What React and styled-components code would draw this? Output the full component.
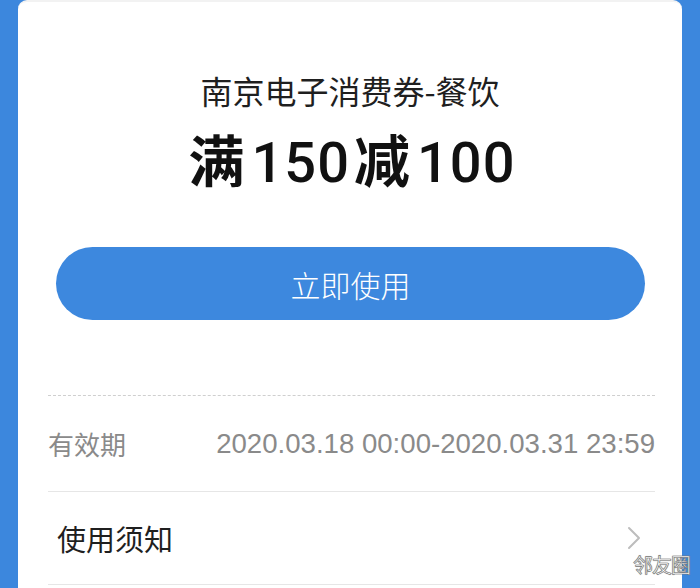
import styled, { createGlobalStyle } from "styled-components";

const GlobalStyle = createGlobalStyle`
  html, body {
    margin: 0;
    padding: 0;
    background: #3c87dd;
  }
  #root {
    height: 588px;
  }
`;

const Page = styled.div`
  height: 588px;
  padding: 0 18px;
  box-sizing: border-box;
  background: #3c87dd;
  overflow: hidden;
  position: relative;
  font-family: "Liberation Sans", "Noto Sans CJK SC", sans-serif;
`;

const Card = styled.div`
  height: 100%;
  background: #fff;
  border-radius: 9px 9px 0 0;
  border-top: 2px solid #f2f2f2;
  box-sizing: border-box;
  padding-top: 68px;
  display: flex;
  flex-direction: column;
`;

const Title = styled.div`
  text-align: center;
  font-size: 32px;
  line-height: 40px;
  height: 40px;
  color: #1f1f1f;
  font-family: "Noto Sans CJK SC", sans-serif;
`;

const Amount = styled.div`
  margin-top: 18px;
  height: 60px;
  text-align: center;
  font-size: 56px;
  line-height: 60px;
  font-weight: 500;
  color: #111;
  letter-spacing: 1px;
  font-family: Roboto, "Noto Sans CJK SC", sans-serif;
  span {
    font-family: "Noto Sans CJK SC", sans-serif;
    font-weight: 700;
    margin: 0 6px 0 4px;
  }
`;

const UseButton = styled.button`
  flex: none;
  margin: 59px 37px 0 38px;
  height: 73px;
  border: none;
  border-radius: 37px;
  background: #3d88de;
  color: #fff;
  font-size: 30px;
  font-family: "Noto Sans CJK SC", sans-serif;
  font-weight: 300;
  cursor: pointer;
`;

const Details = styled.div`
  margin: 75px 27px 0 30px;
  border-top: 1px dashed #cfcfcf;
`;

const Row = styled.div`
  display: flex;
  align-items: center;
  justify-content: space-between;
  height: ${(p) => p.$h}px;
  padding-left: ${(p) => p.$indent || 0}px;
  padding-right: ${(p) => p.$right || 0}px;
  border-bottom: 1px solid #e6e6e6;
  box-sizing: border-box;
`;

const Label = styled.div`
  font-family: "Noto Sans CJK SC", sans-serif;
  font-size: ${(p) => p.$size}px;
  color: ${(p) => p.$color};
`;

const DateText = styled.div`
  font-family: "Liberation Sans", sans-serif;
  font-size: 27.6px;
  color: #8a8a8a;
`;

const Watermark = styled.div`
  position: absolute;
  right: 10px;
  bottom: 9px;
  font-family: "Noto Sans CJK SC", sans-serif;
  font-size: 20px;
  color: #fff;
  letter-spacing: -1px;
  -webkit-text-stroke: 0.6px #777;
  text-shadow: 0 0 1px #666;
`;

const Chevron = () => (
  <svg width="14" height="24" viewBox="0 0 14 24">
    <polyline
      points="2,2 12,12 2,22"
      fill="none"
      stroke="#bdbdbd"
      strokeWidth="2"
      strokeLinecap="round"
      strokeLinejoin="round"
    />
  </svg>
);

export default function App() {
  return (
    <>
      <GlobalStyle />
      <Page>
        <Card>
          <Title>南京电子消费券-餐饮</Title>
          <Amount>
            <span>满</span>150<span>减</span>100
          </Amount>
          <UseButton>立即使用</UseButton>
          <Details>
            <Row $h={96}>
              <Label $size={26} $color="#8a8a8a">有效期</Label>
              <DateText>2020.03.18 00:00-2020.03.31 23:59</DateText>
            </Row>
            <Row $h={93} $indent={9} $right={14}>
              <Label $size={29} $color="#1f1f1f">使用须知</Label>
              <Chevron />
            </Row>
          </Details>
        </Card>
        <Watermark>邻友圈</Watermark>
      </Page>
    </>
  );
}
